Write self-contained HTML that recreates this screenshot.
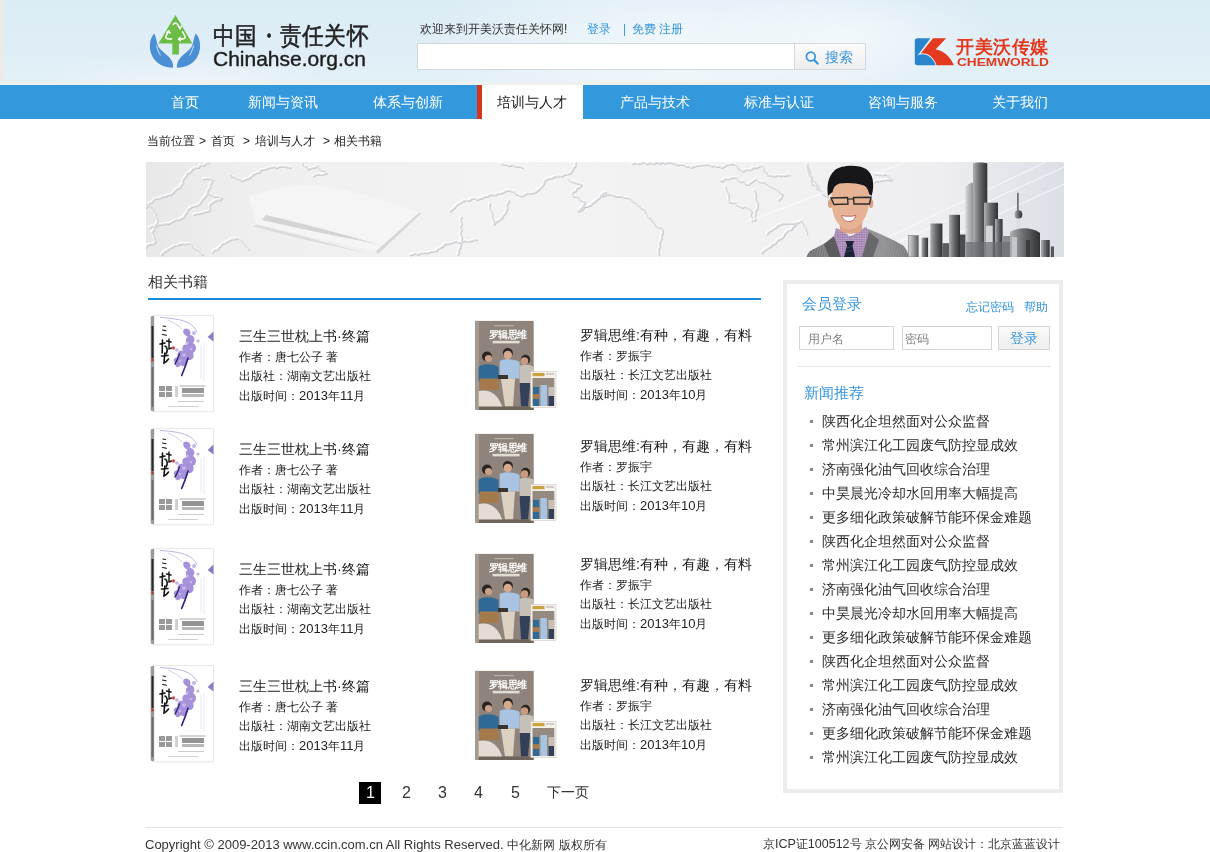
<!DOCTYPE html>
<html><head><meta charset="utf-8">
<style>
*{margin:0;padding:0;box-sizing:border-box}
html,body{width:1210px;height:852px;overflow:hidden;background:#fff}
body{font-family:"Liberation Sans",sans-serif;color:#333;position:relative;will-change:transform}
.a{position:absolute;white-space:nowrap;line-height:1}
svg{display:block}
#hdr{position:absolute;left:0;top:0;width:1210px;height:85px;overflow:hidden;
 background:linear-gradient(180deg,#dbecf5 0%,#dfeef6 60%,#e3f0f7 100%)}
#nav{position:absolute;left:0;top:85px;width:1210px;height:34px;background:#3498dd}
#nav .it{position:absolute;top:0;height:34px;line-height:34px;font-size:14px;color:#fff}
#nav .act{background:#fff;border-left:5px solid #d6361e;color:#222}
.crumb{font-size:12px;color:#222}
.t{font-size:14px;color:#1a1a1a}
.d{font-size:12px;color:#222}
.nw{font-size:14px;color:#2a2a2a;left:822px}
.bul{position:absolute;left:810px;width:3px;height:3px;background:#888}
.pg{font-size:16px;color:#333}
.n{font-size:13px;line-height:0}
</style></head><body>
<svg width="0" height="0" style="position:absolute">
 <defs>
  <symbol id="bk1" viewBox="0 0 70 102">
   <path d="M2.7 3.5 L6.4 2.6 L6.4 98.8 L2.7 97.5 Z" fill="#9a9a9a"/>
   <rect x="3.5" y="13" width="2" height="32" fill="#2a2a2a"/>
   <rect x="3.4" y="45.5" width="2.2" height="3" fill="#c03030"/>
   <rect x="3.6" y="54" width="1.8" height="40" fill="#6a6a6a"/>
   <rect x="6.4" y="2.6" width="59.1" height="96.2" fill="#ffffff"/>
   <path d="M6.4 2.6 L65.5 2.6 L65.5 98.8 L6.4 98.8" fill="none" stroke="#e0e0e0" stroke-width="0.8"/>
   <path d="M12 4.5 C20 5 28 5.5 36 8 C42 10 47 14 49 19" stroke="#9080d0" stroke-width="0.6" fill="none"/>
   <path d="M20 7 C26 10 30 12 34 16" stroke="#a898d8" stroke-width="0.5" fill="none"/>
   <g fill="#9d86d6" opacity="0.9">
    <path d="M36 16 C40 14 44 18 42 22 C46 22 48 27 45 30 C49 32 49 38 45 40 C47 44 44 48 40 47 C40 52 36 55 33 52 C30 56 26 54 28 50 C24 48 26 44 30 44 C28 40 32 36 35 38 C33 34 36 30 39 32 C37 28 38 24 40 24 C36 22 34 19 36 16 Z"/>
   </g>
   <g fill="#c8b8ee"><circle cx="39" cy="30" r="1.6"/><circle cx="36" cy="42" r="1.8"/><circle cx="43" cy="36" r="1.3"/><circle cx="32" cy="48" r="1.2"/></g>
   <g fill="#b6a2e4" opacity="0.8"><circle cx="46" cy="20" r="2"/><circle cx="50" cy="28" r="1.6"/><circle cx="29" cy="37" r="1.8"/></g>
   <path d="M31.5 41 C30 45 29 48 27 51" stroke="#2a2480" stroke-width="1.4" fill="none" stroke-linecap="round"/>
   <path d="M40 45 C38 52 36 57 33.7 62.4" stroke="#2a2480" stroke-width="1.6" fill="none" stroke-linecap="round"/>
   <g stroke="#151515" fill="none" stroke-linecap="round">
    <path d="M15 13 L17.5 13.5 M14.5 17 L18 17.8 M14.5 21.5 L18.5 22.3" stroke-width="1.1"/>
    <path d="M12 31 L17 30 M14.5 27 L14.2 40 M17 33 C19.5 34 20 38 18 41" stroke-width="1.6"/>
    <path d="M18.5 28 L23 29 M21 26 L21 36 L23.5 35" stroke-width="1.4"/>
    <path d="M13.5 43 L20 42.5 M16.8 40 L16 50 C18 49 19.5 47.5 20.5 46" stroke-width="1.6"/>
   </g>
   <rect x="24.3" y="33.5" width="2.4" height="3" fill="#c83030"/>
   <path d="M59.6 24 L65.5 18.4 L65.5 28.5 Z" fill="#8c7cc8"/>
   <path d="M56 30 L56 68 M53 32 L53 66" stroke="#d4ccea" stroke-width="0.5"/>
   <g fill="#9a9a9a" transform="translate(0,10)"><rect x="11" y="63" width="6" height="5"/><rect x="18" y="63" width="6" height="5"/><rect x="11" y="69" width="6" height="5"/><rect x="18" y="69" width="6" height="5"/>
   <rect x="27" y="63" width="3" height="11" fill="#d0d0d0"/>
   <rect x="31.5" y="62.4" width="26" height="1.2" fill="#b8b8b8"/>
   <rect x="34" y="65" width="22" height="5" fill="#959595"/>
   <rect x="34" y="71" width="22" height="3" fill="#b8b8b8"/>
   <rect x="30" y="78" width="26" height="1" fill="#cccccc"/></g>
   <rect x="20" y="93" width="30" height="1" fill="#d0d0d0"/>
  </symbol>
  <symbol id="bk2" viewBox="0 0 90 96">
   <rect x="3" y="1.9" width="58.7" height="89.1" fill="#8e847b"/>
   <rect x="3" y="1.9" width="4" height="89.1" fill="#a39a91"/>
   <text x="16.5" y="19" font-size="9.5" fill="#fff" font-weight="bold" letter-spacing="-0.4">罗辑思维</text>
   <rect x="20.6" y="21.8" width="27" height="2.6" fill="#e0dcd6"/>
   <rect x="22" y="6" width="20" height="1.2" fill="#b8b0a8"/>
   <path d="M6.6 72 C14 70 26 72 31 90 L6.6 90 Z" fill="#e4dcd2"/>
   <circle cx="15" cy="37.5" r="5" fill="#2a2420"/>
   <circle cx="16.5" cy="39.5" r="3.6" fill="#caa08a"/>
   <path d="M6.6 48 C9 45 20 44 26.5 48 L26.5 61.7 L6.6 61.7 Z" fill="#2f6a96"/>
   <path d="M7.7 59.4 L26.5 59.4 L27 71 L7.7 71 Z" fill="#a47a4c"/>
   <circle cx="35.8" cy="34" r="5" fill="#2a2420"/>
   <circle cx="35.8" cy="36" r="4.2" fill="#d6aa8c"/>
   <path d="M27.7 42 C31 39.4 42 39.4 47.6 43 L47.6 59.4 L27.7 59.4 Z" fill="#a9c4e2"/>
   <path d="M28.9 59.4 L43 59.4 L41 87.5 L33 87.5 Z" fill="#ddd2c2"/>
   <path d="M26 56 L36 56 L36 60 L26 60 Z" fill="#3a3430"/>
   <circle cx="53.5" cy="40.5" r="4.7" fill="#2a2420"/>
   <circle cx="52.5" cy="42" r="3.8" fill="#c89c80"/>
   <path d="M47.6 47 C50 45.3 59 45.3 61.7 48 L61.7 66.4 L47.6 66.4 Z" fill="#c6c0b8"/>
   <path d="M47.6 64 L58.2 64 L56 87.5 L49 87.5 Z" fill="#34405a"/>
   <rect x="6.6" y="87.5" width="55" height="3.5" fill="#6e645a"/>
   <rect x="58.8" y="52.3" width="25.2" height="36.4" fill="#f4f0ea" stroke="#c8c0b6" stroke-width="0.5"/>
   <rect x="60.5" y="54" width="12" height="3.2" fill="#c9a440"/>
   <rect x="74" y="54.5" width="8" height="1" fill="#aaa"/>
   <rect x="60.5" y="59" width="21.8" height="28" fill="#958a80"/>
   <path d="M61 68 L67 68 L67 87 L61 87 Z" fill="#2f6a96"/>
   <path d="M61 75 L67 75 L67 80 L61 80 Z" fill="#a47a4c"/>
   <path d="M68.5 66 L75 66 L75 87 L68.5 87 Z" fill="#a9c4e2"/>
   <path d="M76.5 68 L82 68 L82 87 L76.5 87 Z" fill="#c6c0b8"/>
   <path d="M76.5 77 L82 77 L82 87 L76.5 87 Z" fill="#34405a"/>
  </symbol>
 </defs>
</svg>
<div id="hdr">
 <div style="position:absolute;left:0;top:0;width:4px;height:85px;background:#eaeceb"></div>
 <div style="position:absolute;left:420px;top:-50px;width:520px;height:190px;border-radius:50%;background:radial-gradient(ellipse at center,rgba(255,255,255,.6) 0%,rgba(255,255,255,0) 70%)"></div>
 <div style="position:absolute;left:700px;top:-20px;width:300px;height:110px;border-radius:50%;background:radial-gradient(ellipse at center,rgba(255,255,255,.5) 0%,rgba(255,255,255,0) 70%)"></div>
 <div style="position:absolute;left:30px;top:50px;width:320px;height:70px;border-radius:50%;background:radial-gradient(ellipse at center,rgba(255,255,255,.35) 0%,rgba(255,255,255,0) 70%)"></div>
 
 <div style="position:absolute;left:0;top:82px;width:1210px;height:3px;background:#eff1ee"></div>
</div>
<!-- logo icon -->
<svg class="a" style="left:140px;top:8px" width="70" height="67" viewBox="0 0 70 67">
 <path d="M35.4 7 L52.4 35.4 L38.9 35.4 L38.9 46.4 L32.3 46.4 L32.3 35.4 L18.5 35.4 Z" fill="#6cbd45"/>
 <g fill="none" stroke="#fff" stroke-width="1.5" stroke-linecap="round" stroke-linejoin="round">
  <path d="M33.2 16.5 C34.5 14.5 36.3 14.5 37.6 16.5 L40 20.5"/>
  <path d="M38.6 18.8 L40.2 20.8 L41.2 18.2"/>
  <path d="M42.6 23.8 L44.6 27.3 C45.8 29.4 45 31 42.6 31 L39 31"/>
  <path d="M40.4 29.5 L38.6 31 L40.4 32.6"/>
  <path d="M31.6 31 L28.3 31 C25.9 31 25.1 29.4 26.3 27.3 L28.6 23.3"/>
  <path d="M26.8 24.6 L28.8 22.8 L30 25.2"/>
 </g>
 <path d="M14.2 25.6 C9 31 8 43 14 51 C18 56 24 59.5 33 59.8 C33.6 56 32 52 28.5 48.5 C25 45 20 42 18 38 C16.5 34 16 29 14.2 25.6 Z" fill="#4b8fd5"/>
 <path d="M55.8 25.6 C61 31 62 43 56 51 C52 56 46 59.5 37 59.8 C36.4 56 38 52 41.5 48.5 C45 45 50 42 52 38 C53.5 34 54 29 55.8 25.6 Z" fill="#4b8fd5"/>
 <path d="M16.5 37.5 C17.5 42 19 45 20.5 47.5" stroke="#e4eef5" stroke-width="0.9" fill="none"/>
 <path d="M53.5 37.5 C52.5 42 51 45 49.5 47.5" stroke="#e4eef5" stroke-width="0.9" fill="none"/>
</svg>
<div class="a" style="left:213px;top:24px;font-size:22px;color:#222;font-weight:500;letter-spacing:0.3px;-webkit-text-stroke:0.5px #222;transform:scaleY(1.11);transform-origin:0 0">中国・责任关怀</div>
<div class="a" style="left:213px;top:48px;font-size:21px;color:#1e1e1e;-webkit-text-stroke:0.4px #1e1e1e">Chinahse.org.cn</div>
<div class="a" style="left:420px;top:23px;font-size:12px;color:#333">欢迎来到开美沃责任关怀网!</div>
<div class="a" style="left:587px;top:23px;font-size:12px;color:#3795dd">登录</div>
<div class="a" style="left:623px;top:23px;font-size:12px;color:#3795dd">|</div>
<div class="a" style="left:632px;top:23px;font-size:12px;color:#3795dd">免费 注册</div>
<div class="a" style="left:417px;top:43px;width:378px;height:27px;background:#fff;border:1px solid #d3d8dc"></div>
<div class="a" style="left:794px;top:43px;width:72px;height:27px;background:linear-gradient(#fbfbfb,#eeeeee);border:1px solid #d3d8dc"></div>
<svg class="a" style="left:804px;top:50px" width="16" height="16" viewBox="0 0 16 16"><circle cx="6.8" cy="6.5" r="4.4" stroke="#3795dd" stroke-width="1.7" fill="none"/><path d="M10.2 10 L13.6 13.6" stroke="#3795dd" stroke-width="2.2" stroke-linecap="round"/></svg>
<div class="a" style="left:825px;top:50px;font-size:14px;color:#3795dd">搜索</div>
<!-- chemworld logo -->
<svg class="a" style="left:912px;top:36px" width="44" height="32" viewBox="0 0 44 32">
 <path d="M5.3 2.2 L18.4 2.2 L5.6 19.6 C12 16.3 20 19.5 23.6 29.2 L5.3 29.2 C3.8 29.2 2.8 28.2 2.8 26.7 L2.8 4.7 C2.8 3.2 3.8 2.2 5.3 2.2 Z" fill="#2a85cc"/>
 <path d="M21 2.2 L34 2.2 L23.6 13.5 C31 14.5 38 20 41.9 29.2 L24.5 29.2 C22 21 16 16.5 8.9 17.2 Z" fill="#e2391f"/>
</svg>
<div class="a" style="left:956px;top:38px;font-family:'Liberation Serif',serif;font-size:18px;color:#e2391f;font-weight:bold;letter-spacing:0.6px">开美沃传媒</div>
<div class="a" style="left:957px;top:57px;font-size:10.5px;color:#e2391f;font-weight:bold;transform:scaleX(1.3);transform-origin:0 0">CHEMWORLD</div>

<div id="nav">
 <div class="it" style="left:171px">首页</div>
 <div class="it" style="left:248px">新闻与资讯</div>
 <div class="it" style="left:373px">体系与创新</div>
 <div class="it act" style="left:477px;width:106px;padding-left:15px">培训与人才</div>
 <div class="it" style="left:620px">产品与技术</div>
 <div class="it" style="left:744px">标准与认证</div>
 <div class="it" style="left:868px">咨询与服务</div>
 <div class="it" style="left:992px">关于我们</div>
</div>

<div class="a crumb" style="left:147px;top:135px">当前位置</div>
<div class="a crumb" style="left:199px;top:135px">&gt;</div>
<div class="a crumb" style="left:211px;top:135px">首页</div>
<div class="a crumb" style="left:243px;top:135px">&gt;</div>
<div class="a crumb" style="left:255px;top:135px">培训与人才</div>
<div class="a crumb" style="left:323px;top:135px">&gt;</div>
<div class="a crumb" style="left:334px;top:135px">相关书籍</div>

<!-- banner -->
<svg id="banner" class="a" style="left:146px;top:162px" width="918" height="95" viewBox="0 0 918 95">
 <defs>
  <linearGradient id="bg1" x1="0" y1="0" x2="1" y2="0">
   <stop offset="0" stop-color="#e8e8e9"/><stop offset="0.12" stop-color="#efeff0"/><stop offset="0.4" stop-color="#f3f3f3"/><stop offset="0.7" stop-color="#f1f1f2"/><stop offset="0.86" stop-color="#eeeef0"/><stop offset="1" stop-color="#dcdfe6"/>
  </linearGradient>
  <linearGradient id="suit" x1="0" y1="0" x2="1" y2="0">
   <stop offset="0" stop-color="#7a7a7c"/><stop offset="0.5" stop-color="#9a9a9c"/><stop offset="1" stop-color="#808082"/>
  </linearGradient>
  <linearGradient id="bld" x1="0" y1="0" x2="1" y2="0">
   <stop offset="0" stop-color="#5a5c60"/><stop offset="0.5" stop-color="#9a9ca0"/><stop offset="1" stop-color="#4a4c50"/>
  </linearGradient>
 </defs>
 <rect width="918" height="95" fill="url(#bg1)"/>
 <g fill="none" stroke-linejoin="round" stroke-linecap="round">
  <path d="M0.0 45.5 L1.6 43.3 L3.3 41.2 L5.9 40.1 L7.6 38.0 L9.8 36.4 L12.5 36.6 L14.8 35.6 L17.1 34.2 L19.8 34.4 L22.0 32.7 L24.7 33.0 L26.9 31.0 L28.8 28.6 L31.1 26.7 L34.0 25.6 L35.0 23.1 L37.0 21.1 L36.8 18.1 L38.1 15.8 L40.1 13.8 L41.0 11.3 L43.7 10.7 L45.3 8.6 L47.2 6.8 L49.4 5.6 L52.4 5.6 L54.4 2.8 L57.6 3.5 L59.9 1.4 L62.7 0.8 M57.0 17.0 L60.2 16.6 L63.4 16.8 L66.5 18.0 L65.9 20.5 L64.0 22.4 L64.3 25.3 L62.5 27.3 L61.5 29.6 L60.8 32.0 L59.1 34.8 L56.8 37.1 L55.0 39.8 L53.3 41.9 L51.1 43.2 L48.7 44.2 L46.0 44.5 L44.1 46.3 L41.8 47.4 L40.9 50.1 L39.1 52.4 L38.0 55.0 L35.4 56.2 L32.9 57.7 L29.8 57.8 L27.2 59.2 L24.7 60.7 L22.2 61.8 L19.4 61.7 L16.9 62.4 L14.1 62.3 L11.5 63.2 L9.1 64.8 L6.2 63.9 L3.8 65.5 M60.8 32.2 L63.5 32.0 L65.9 33.3 L68.3 34.6 L71.1 34.0 L73.5 35.3 L76.0 36.0 L74.2 38.0 L71.3 37.9 L68.9 38.9 L66.8 40.4 L64.6 41.7 L63.2 44.0 L63.7 46.9 L62.7 49.3 L60.1 49.5 L57.6 50.3 L55.1 51.0 L52.6 51.9 L49.9 51.7 L47.5 53.0 M83.6 12.3 L85.4 14.5 L88.2 14.9 L90.3 16.6 L93.2 16.8 L95.0 19.0 L97.5 18.2 L99.7 17.0 L102.4 16.5 L104.5 15.0 L106.5 13.2 L108.6 11.6 L110.9 10.7 L113.5 10.1 L115.2 7.7 L117.9 7.5 L120.4 6.9 L122.8 5.8 L125.3 5.2 L127.8 4.6 L130.6 5.7 L133.0 4.7 L135.9 4.1 L138.8 4.6 L141.6 5.1 L144.5 5.6 M156.0 0.8 L157.2 3.6 L160.4 4.7 L161.6 7.5 L163.9 6.4 L166.3 5.7 L169.0 5.4 L171.0 3.7 L173.0 6.2 L175.3 8.1 L178.5 9.0 L180.6 11.3 L178.0 12.1 L175.3 12.8 L172.4 12.2 L169.7 12.6 L167.3 14.2 M15.2 93.0 L17.0 90.8 L19.2 89.3 L21.5 87.8 L23.7 86.2 L26.3 85.1 L28.5 83.5 L31.1 83.4 L33.5 82.3 L36.0 81.5 L38.6 82.1 L41.1 81.6 L43.7 81.6 L45.5 83.3 L46.9 85.6 L49.1 86.8 L51.3 88.1 L53.0 89.9 L54.8 91.7 L57.0 93.0 M66.5 91.0 L67.7 88.4 L70.9 87.9 L72.6 85.8 L74.7 84.1 L76.0 81.6 L78.7 81.3 L80.9 79.5 L83.4 78.6 L85.7 77.0 L88.6 77.2 L91.0 76.0 L93.6 77.2 L95.6 79.1 L97.3 81.2 L99.3 83.1 L101.0 85.2 L102.7 87.4 M0.0 41.7 L2.6 42.9 L4.6 44.7 L6.2 46.9 L7.6 49.3 L9.4 51.9 L9.8 54.9 L11.4 57.5 L11.4 60.7 L9.3 62.7 L8.3 65.3 L7.8 68.2 L5.7 70.2 L7.2 72.4 L7.9 74.9 L8.8 77.3 L9.5 79.8 L7.6 81.9 L4.4 82.0 L1.8 83.1 L0.0 85.5 M304.0 49.3 L306.2 47.5 L308.5 45.8 L310.2 43.4 L312.5 41.7 L315.0 40.4 L317.5 38.9 L320.1 38.0 L323.0 38.8 L325.5 36.9 L328.2 36.2 L331.2 37.8 L333.8 36.5 L336.5 36.0 L338.8 34.5 L341.6 34.5 L343.8 32.7 L346.7 32.9 L349.5 33.1 L351.7 31.3 L354.7 31.3 L357.5 30.3 L360.0 28.6 L363.0 28.4 L365.4 29.3 L367.9 30.0 L369.6 32.3 L372.2 32.9 L374.5 34.0 L377.1 33.8 L379.3 32.0 L381.6 31.0 L384.5 31.5 L387.0 31.0 L389.4 29.9 L391.6 28.4 L394.0 26.5 L395.9 24.3 L397.6 21.9 L398.7 18.9 L401.0 17.0 L403.6 16.6 L406.0 15.8 L408.5 14.6 L411.0 14.1 L413.7 14.2 L416.3 14.2 L418.4 12.5 L421.2 12.2 L423.9 11.5 L425.8 9.4 L427.0 6.5 L429.2 4.1 L429.6 0.8 M344.0 41.7 L343.3 44.5 L343.8 47.2 L345.5 49.6 L346.2 52.2 L346.0 55.0 L347.2 57.4 L347.9 59.9 L347.9 62.6 L349.3 60.2 L351.9 59.0 L354.2 57.5 L356.0 55.5 L357.4 53.1 L359.3 51.2 L360.4 48.7 L361.4 46.1 L360.6 43.0 L362.6 40.7 L363.0 38.0 M422.0 17.0 L424.3 19.0 L427.1 19.9 L429.8 20.9 L432.7 21.5 L435.3 22.7 L433.9 25.1 L431.1 26.1 L429.9 28.7 L427.2 29.8 L425.8 32.2 L427.5 34.4 L430.3 34.5 L432.5 35.8 L434.1 38.1 L436.6 39.0 L439.0 39.8 L437.7 42.6 L435.9 45.1 L434.0 47.4 L431.5 49.3 L434.4 48.7 L436.7 47.2 L438.5 44.5 L441.6 44.5 L444.2 43.4 L446.3 41.5 L448.6 39.8 L450.7 37.6 L453.2 36.1 L454.9 33.5 L457.0 31.4 L460.0 30.3 M315.5 55.0 L314.5 57.5 L315.2 60.1 L315.4 62.6 L314.5 65.1 L315.6 67.7 L314.7 70.2 L314.8 72.7 L316.1 75.3 L315.5 77.8 L315.4 80.5 L314.7 83.0 L314.2 85.5 L312.8 87.9 L312.8 90.6 L311.7 93.0 M264.0 93.0 L266.5 92.4 L269.0 91.4 L271.8 92.7 L274.2 91.0 L276.8 90.9 L279.4 90.7 L282.0 91.0 L284.4 89.5 L287.0 89.3 L289.9 88.8 L292.0 86.7 L294.5 85.5 L297.0 84.2 L299.0 81.9 L302.0 81.6 L304.7 81.1 L307.3 80.2 L310.0 79.4 L312.9 80.8 L315.5 79.8 L318.0 78.8 L320.6 79.1 L323.2 79.3 L325.7 78.6 L328.2 77.8 L330.8 77.8 M355.5 1.8 L358.1 2.3 L360.7 2.9 L363.2 3.8 L366.1 2.8 L368.5 4.3 L371.3 4.1 L373.9 4.6 L376.4 5.6 M454.0 34.0 L457.3 34.0 L460.3 32.8 L463.5 32.2 L466.2 32.9 L468.8 33.8 L471.5 34.7 L474.4 34.2 L477.0 35.2 L479.8 35.5 L482.5 36.0 L484.7 37.6 L486.6 39.6 L489.1 40.8 L491.1 42.6 L493.4 44.1 L494.9 46.5 L497.7 47.4 L498.9 49.9 L500.1 52.4 L501.5 54.8 L504.2 56.2 L505.3 58.8 L507.5 60.8 L509.2 63.3 L511.7 65.1 L514.9 65.8 L516.7 68.3 L516.8 71.2 L515.3 73.7 L515.4 76.5 L514.3 79.1 L513.0 81.6 L513.9 84.4 L512.6 87.3 L512.4 90.2 L513.0 93.0 M573.8 18.9 L576.7 19.0 L578.9 16.6 L581.9 17.1 L584.5 16.2 L587.0 15.1 L589.9 15.7 L591.7 18.4 L594.2 19.8 L597.5 19.6 L599.3 22.3 L602.3 22.7 L604.7 20.6 L607.4 18.9 L610.0 17.0 L612.0 19.2 L614.7 20.2 L617.8 20.1 L620.1 21.9 L622.5 23.4 L625.0 24.6 L627.5 25.8 L630.0 27.1 L632.1 28.8 L633.9 31.1 L636.5 32.2 L635.5 35.7 L632.7 38.0 M579.5 24.6 L580.0 27.2 L580.9 29.6 L582.4 31.9 L582.4 34.6 L582.4 37.3 L583.3 39.8 L585.9 40.8 L588.8 40.8 L590.7 43.7 L593.4 44.2 L595.9 45.5 L599.1 44.7 L601.6 46.0 L604.0 47.4 L605.5 50.1 L604.4 53.2 L606.0 55.9 L606.0 58.8 M608.0 28.4 L609.5 30.8 L609.7 33.7 L609.4 36.6 L610.4 39.2 L611.8 41.7 L611.8 44.3 L611.5 46.8 L609.3 48.8 L609.5 51.4 L608.7 53.8 L609.4 56.6 L608.0 58.8 M486.3 1.8 L489.1 0.7 L492.0 1.9 L494.8 1.2 L497.6 0.2 L500.6 2.0 L503.4 0.8 L505.9 1.1 L508.5 1.5 L511.0 -0.1 L513.5 1.6 L516.1 -0.1 L518.6 1.6 L521.1 0.7 L523.7 0.5 L526.2 0.8 L528.9 1.6 L531.4 3.1 L534.5 2.4 L537.3 2.8 L539.8 4.3 L542.7 4.4 L545.3 5.6 L547.7 4.3 L550.2 3.9 L552.7 3.2 L555.3 3.1 L557.9 2.8 L560.5 2.8 L563.1 2.8 L565.5 4.3 L568.2 3.7 L570.6 4.7 L573.3 4.4 L575.7 5.6 L578.4 4.3 L581.0 2.7 L584.0 2.2 L587.0 1.8 L590.1 2.9 L591.5 6.0 L594.1 7.6 L596.6 9.4 L599.1 7.9 L602.0 7.7 L605.0 7.9 L607.2 5.3 L610.4 6.0 L612.8 4.4 L615.6 3.7 L617.0 6.1 L617.8 8.8 L620.1 10.7 L621.3 13.2 L623.8 13.2 L626.4 13.6 L628.9 14.3 L631.4 12.9 L634.0 13.9 L636.5 13.7 L639.0 13.5 L641.6 13.0 L644.1 13.2 M661.2 1.8 L662.0 4.6 L663.1 7.3 L663.4 10.2 L663.0 13.2 L665.4 14.9 L665.8 17.9 L668.2 19.5 L670.0 21.6 L671.7 23.7 L672.6 26.5 L674.5 29.0 L676.8 30.9 L679.4 32.4 L682.0 34.0 M615.6 91.0 L617.6 89.0 L619.7 87.4 L622.0 85.9 L624.5 84.7 L626.3 82.5 L629.0 81.6 L630.8 79.6 L632.4 77.4 L635.4 76.6 L637.3 74.7 L638.5 72.2 L640.3 70.2 L642.1 68.1 L645.3 67.8 L646.6 65.0 L648.8 63.4 L650.5 61.2 L653.2 60.2 L655.5 58.8 L656.7 61.4 L657.8 64.1 L659.5 66.5 L660.1 69.4 L661.2 72.0 M621.3 72.0 L622.9 69.5 L625.4 68.4 L627.4 66.6 L630.0 65.6 L631.8 63.3 L634.6 62.6 L637.3 61.2 L640.3 61.5 L643.1 61.1 L646.0 61.5 L648.9 61.1 L651.7 60.7 M660.6 2.4 L660.7 5.0 L661.5 7.5 L662.0 10.1 L662.3 12.7 L664.0 14.9 L664.7 17.4 L665.0 20.0 L666.1 22.6 L669.3 23.2 L670.2 25.9 L672.2 27.7 L675.0 28.6 L675.6 31.7 L678.0 33.0 L681.4 35.0 M726.0 11.0 L728.5 12.2 L731.2 12.0 L733.7 12.7 L736.3 13.2 L739.1 12.1 L741.6 13.3 L743.8 15.5 L746.0 17.7 L743.5 18.0 L740.9 17.6 L738.4 18.0 L735.9 18.3 L733.5 19.2 L730.9 18.8 L728.5 20.0" stroke="#ffffff" stroke-width="1.8" transform="translate(-0.7,-0.7)"/>
  <path d="M0.0 45.5 L1.6 43.3 L3.3 41.2 L5.9 40.1 L7.6 38.0 L9.8 36.4 L12.5 36.6 L14.8 35.6 L17.1 34.2 L19.8 34.4 L22.0 32.7 L24.7 33.0 L26.9 31.0 L28.8 28.6 L31.1 26.7 L34.0 25.6 L35.0 23.1 L37.0 21.1 L36.8 18.1 L38.1 15.8 L40.1 13.8 L41.0 11.3 L43.7 10.7 L45.3 8.6 L47.2 6.8 L49.4 5.6 L52.4 5.6 L54.4 2.8 L57.6 3.5 L59.9 1.4 L62.7 0.8 M57.0 17.0 L60.2 16.6 L63.4 16.8 L66.5 18.0 L65.9 20.5 L64.0 22.4 L64.3 25.3 L62.5 27.3 L61.5 29.6 L60.8 32.0 L59.1 34.8 L56.8 37.1 L55.0 39.8 L53.3 41.9 L51.1 43.2 L48.7 44.2 L46.0 44.5 L44.1 46.3 L41.8 47.4 L40.9 50.1 L39.1 52.4 L38.0 55.0 L35.4 56.2 L32.9 57.7 L29.8 57.8 L27.2 59.2 L24.7 60.7 L22.2 61.8 L19.4 61.7 L16.9 62.4 L14.1 62.3 L11.5 63.2 L9.1 64.8 L6.2 63.9 L3.8 65.5 M60.8 32.2 L63.5 32.0 L65.9 33.3 L68.3 34.6 L71.1 34.0 L73.5 35.3 L76.0 36.0 L74.2 38.0 L71.3 37.9 L68.9 38.9 L66.8 40.4 L64.6 41.7 L63.2 44.0 L63.7 46.9 L62.7 49.3 L60.1 49.5 L57.6 50.3 L55.1 51.0 L52.6 51.9 L49.9 51.7 L47.5 53.0 M83.6 12.3 L85.4 14.5 L88.2 14.9 L90.3 16.6 L93.2 16.8 L95.0 19.0 L97.5 18.2 L99.7 17.0 L102.4 16.5 L104.5 15.0 L106.5 13.2 L108.6 11.6 L110.9 10.7 L113.5 10.1 L115.2 7.7 L117.9 7.5 L120.4 6.9 L122.8 5.8 L125.3 5.2 L127.8 4.6 L130.6 5.7 L133.0 4.7 L135.9 4.1 L138.8 4.6 L141.6 5.1 L144.5 5.6 M156.0 0.8 L157.2 3.6 L160.4 4.7 L161.6 7.5 L163.9 6.4 L166.3 5.7 L169.0 5.4 L171.0 3.7 L173.0 6.2 L175.3 8.1 L178.5 9.0 L180.6 11.3 L178.0 12.1 L175.3 12.8 L172.4 12.2 L169.7 12.6 L167.3 14.2 M15.2 93.0 L17.0 90.8 L19.2 89.3 L21.5 87.8 L23.7 86.2 L26.3 85.1 L28.5 83.5 L31.1 83.4 L33.5 82.3 L36.0 81.5 L38.6 82.1 L41.1 81.6 L43.7 81.6 L45.5 83.3 L46.9 85.6 L49.1 86.8 L51.3 88.1 L53.0 89.9 L54.8 91.7 L57.0 93.0 M66.5 91.0 L67.7 88.4 L70.9 87.9 L72.6 85.8 L74.7 84.1 L76.0 81.6 L78.7 81.3 L80.9 79.5 L83.4 78.6 L85.7 77.0 L88.6 77.2 L91.0 76.0 L93.6 77.2 L95.6 79.1 L97.3 81.2 L99.3 83.1 L101.0 85.2 L102.7 87.4 M0.0 41.7 L2.6 42.9 L4.6 44.7 L6.2 46.9 L7.6 49.3 L9.4 51.9 L9.8 54.9 L11.4 57.5 L11.4 60.7 L9.3 62.7 L8.3 65.3 L7.8 68.2 L5.7 70.2 L7.2 72.4 L7.9 74.9 L8.8 77.3 L9.5 79.8 L7.6 81.9 L4.4 82.0 L1.8 83.1 L0.0 85.5 M304.0 49.3 L306.2 47.5 L308.5 45.8 L310.2 43.4 L312.5 41.7 L315.0 40.4 L317.5 38.9 L320.1 38.0 L323.0 38.8 L325.5 36.9 L328.2 36.2 L331.2 37.8 L333.8 36.5 L336.5 36.0 L338.8 34.5 L341.6 34.5 L343.8 32.7 L346.7 32.9 L349.5 33.1 L351.7 31.3 L354.7 31.3 L357.5 30.3 L360.0 28.6 L363.0 28.4 L365.4 29.3 L367.9 30.0 L369.6 32.3 L372.2 32.9 L374.5 34.0 L377.1 33.8 L379.3 32.0 L381.6 31.0 L384.5 31.5 L387.0 31.0 L389.4 29.9 L391.6 28.4 L394.0 26.5 L395.9 24.3 L397.6 21.9 L398.7 18.9 L401.0 17.0 L403.6 16.6 L406.0 15.8 L408.5 14.6 L411.0 14.1 L413.7 14.2 L416.3 14.2 L418.4 12.5 L421.2 12.2 L423.9 11.5 L425.8 9.4 L427.0 6.5 L429.2 4.1 L429.6 0.8 M344.0 41.7 L343.3 44.5 L343.8 47.2 L345.5 49.6 L346.2 52.2 L346.0 55.0 L347.2 57.4 L347.9 59.9 L347.9 62.6 L349.3 60.2 L351.9 59.0 L354.2 57.5 L356.0 55.5 L357.4 53.1 L359.3 51.2 L360.4 48.7 L361.4 46.1 L360.6 43.0 L362.6 40.7 L363.0 38.0 M422.0 17.0 L424.3 19.0 L427.1 19.9 L429.8 20.9 L432.7 21.5 L435.3 22.7 L433.9 25.1 L431.1 26.1 L429.9 28.7 L427.2 29.8 L425.8 32.2 L427.5 34.4 L430.3 34.5 L432.5 35.8 L434.1 38.1 L436.6 39.0 L439.0 39.8 L437.7 42.6 L435.9 45.1 L434.0 47.4 L431.5 49.3 L434.4 48.7 L436.7 47.2 L438.5 44.5 L441.6 44.5 L444.2 43.4 L446.3 41.5 L448.6 39.8 L450.7 37.6 L453.2 36.1 L454.9 33.5 L457.0 31.4 L460.0 30.3 M315.5 55.0 L314.5 57.5 L315.2 60.1 L315.4 62.6 L314.5 65.1 L315.6 67.7 L314.7 70.2 L314.8 72.7 L316.1 75.3 L315.5 77.8 L315.4 80.5 L314.7 83.0 L314.2 85.5 L312.8 87.9 L312.8 90.6 L311.7 93.0 M264.0 93.0 L266.5 92.4 L269.0 91.4 L271.8 92.7 L274.2 91.0 L276.8 90.9 L279.4 90.7 L282.0 91.0 L284.4 89.5 L287.0 89.3 L289.9 88.8 L292.0 86.7 L294.5 85.5 L297.0 84.2 L299.0 81.9 L302.0 81.6 L304.7 81.1 L307.3 80.2 L310.0 79.4 L312.9 80.8 L315.5 79.8 L318.0 78.8 L320.6 79.1 L323.2 79.3 L325.7 78.6 L328.2 77.8 L330.8 77.8 M355.5 1.8 L358.1 2.3 L360.7 2.9 L363.2 3.8 L366.1 2.8 L368.5 4.3 L371.3 4.1 L373.9 4.6 L376.4 5.6 M454.0 34.0 L457.3 34.0 L460.3 32.8 L463.5 32.2 L466.2 32.9 L468.8 33.8 L471.5 34.7 L474.4 34.2 L477.0 35.2 L479.8 35.5 L482.5 36.0 L484.7 37.6 L486.6 39.6 L489.1 40.8 L491.1 42.6 L493.4 44.1 L494.9 46.5 L497.7 47.4 L498.9 49.9 L500.1 52.4 L501.5 54.8 L504.2 56.2 L505.3 58.8 L507.5 60.8 L509.2 63.3 L511.7 65.1 L514.9 65.8 L516.7 68.3 L516.8 71.2 L515.3 73.7 L515.4 76.5 L514.3 79.1 L513.0 81.6 L513.9 84.4 L512.6 87.3 L512.4 90.2 L513.0 93.0 M573.8 18.9 L576.7 19.0 L578.9 16.6 L581.9 17.1 L584.5 16.2 L587.0 15.1 L589.9 15.7 L591.7 18.4 L594.2 19.8 L597.5 19.6 L599.3 22.3 L602.3 22.7 L604.7 20.6 L607.4 18.9 L610.0 17.0 L612.0 19.2 L614.7 20.2 L617.8 20.1 L620.1 21.9 L622.5 23.4 L625.0 24.6 L627.5 25.8 L630.0 27.1 L632.1 28.8 L633.9 31.1 L636.5 32.2 L635.5 35.7 L632.7 38.0 M579.5 24.6 L580.0 27.2 L580.9 29.6 L582.4 31.9 L582.4 34.6 L582.4 37.3 L583.3 39.8 L585.9 40.8 L588.8 40.8 L590.7 43.7 L593.4 44.2 L595.9 45.5 L599.1 44.7 L601.6 46.0 L604.0 47.4 L605.5 50.1 L604.4 53.2 L606.0 55.9 L606.0 58.8 M608.0 28.4 L609.5 30.8 L609.7 33.7 L609.4 36.6 L610.4 39.2 L611.8 41.7 L611.8 44.3 L611.5 46.8 L609.3 48.8 L609.5 51.4 L608.7 53.8 L609.4 56.6 L608.0 58.8 M486.3 1.8 L489.1 0.7 L492.0 1.9 L494.8 1.2 L497.6 0.2 L500.6 2.0 L503.4 0.8 L505.9 1.1 L508.5 1.5 L511.0 -0.1 L513.5 1.6 L516.1 -0.1 L518.6 1.6 L521.1 0.7 L523.7 0.5 L526.2 0.8 L528.9 1.6 L531.4 3.1 L534.5 2.4 L537.3 2.8 L539.8 4.3 L542.7 4.4 L545.3 5.6 L547.7 4.3 L550.2 3.9 L552.7 3.2 L555.3 3.1 L557.9 2.8 L560.5 2.8 L563.1 2.8 L565.5 4.3 L568.2 3.7 L570.6 4.7 L573.3 4.4 L575.7 5.6 L578.4 4.3 L581.0 2.7 L584.0 2.2 L587.0 1.8 L590.1 2.9 L591.5 6.0 L594.1 7.6 L596.6 9.4 L599.1 7.9 L602.0 7.7 L605.0 7.9 L607.2 5.3 L610.4 6.0 L612.8 4.4 L615.6 3.7 L617.0 6.1 L617.8 8.8 L620.1 10.7 L621.3 13.2 L623.8 13.2 L626.4 13.6 L628.9 14.3 L631.4 12.9 L634.0 13.9 L636.5 13.7 L639.0 13.5 L641.6 13.0 L644.1 13.2 M661.2 1.8 L662.0 4.6 L663.1 7.3 L663.4 10.2 L663.0 13.2 L665.4 14.9 L665.8 17.9 L668.2 19.5 L670.0 21.6 L671.7 23.7 L672.6 26.5 L674.5 29.0 L676.8 30.9 L679.4 32.4 L682.0 34.0 M615.6 91.0 L617.6 89.0 L619.7 87.4 L622.0 85.9 L624.5 84.7 L626.3 82.5 L629.0 81.6 L630.8 79.6 L632.4 77.4 L635.4 76.6 L637.3 74.7 L638.5 72.2 L640.3 70.2 L642.1 68.1 L645.3 67.8 L646.6 65.0 L648.8 63.4 L650.5 61.2 L653.2 60.2 L655.5 58.8 L656.7 61.4 L657.8 64.1 L659.5 66.5 L660.1 69.4 L661.2 72.0 M621.3 72.0 L622.9 69.5 L625.4 68.4 L627.4 66.6 L630.0 65.6 L631.8 63.3 L634.6 62.6 L637.3 61.2 L640.3 61.5 L643.1 61.1 L646.0 61.5 L648.9 61.1 L651.7 60.7 M660.6 2.4 L660.7 5.0 L661.5 7.5 L662.0 10.1 L662.3 12.7 L664.0 14.9 L664.7 17.4 L665.0 20.0 L666.1 22.6 L669.3 23.2 L670.2 25.9 L672.2 27.7 L675.0 28.6 L675.6 31.7 L678.0 33.0 L681.4 35.0 M726.0 11.0 L728.5 12.2 L731.2 12.0 L733.7 12.7 L736.3 13.2 L739.1 12.1 L741.6 13.3 L743.8 15.5 L746.0 17.7 L743.5 18.0 L740.9 17.6 L738.4 18.0 L735.9 18.3 L733.5 19.2 L730.9 18.8 L728.5 20.0" stroke="#c6c6cd" stroke-width="1.4" transform="translate(0.6,0.7)"/>
  <path d="M0.0 45.5 L1.6 43.3 L3.3 41.2 L5.9 40.1 L7.6 38.0 L9.8 36.4 L12.5 36.6 L14.8 35.6 L17.1 34.2 L19.8 34.4 L22.0 32.7 L24.7 33.0 L26.9 31.0 L28.8 28.6 L31.1 26.7 L34.0 25.6 L35.0 23.1 L37.0 21.1 L36.8 18.1 L38.1 15.8 L40.1 13.8 L41.0 11.3 L43.7 10.7 L45.3 8.6 L47.2 6.8 L49.4 5.6 L52.4 5.6 L54.4 2.8 L57.6 3.5 L59.9 1.4 L62.7 0.8 M57.0 17.0 L60.2 16.6 L63.4 16.8 L66.5 18.0 L65.9 20.5 L64.0 22.4 L64.3 25.3 L62.5 27.3 L61.5 29.6 L60.8 32.0 L59.1 34.8 L56.8 37.1 L55.0 39.8 L53.3 41.9 L51.1 43.2 L48.7 44.2 L46.0 44.5 L44.1 46.3 L41.8 47.4 L40.9 50.1 L39.1 52.4 L38.0 55.0 L35.4 56.2 L32.9 57.7 L29.8 57.8 L27.2 59.2 L24.7 60.7 L22.2 61.8 L19.4 61.7 L16.9 62.4 L14.1 62.3 L11.5 63.2 L9.1 64.8 L6.2 63.9 L3.8 65.5 M60.8 32.2 L63.5 32.0 L65.9 33.3 L68.3 34.6 L71.1 34.0 L73.5 35.3 L76.0 36.0 L74.2 38.0 L71.3 37.9 L68.9 38.9 L66.8 40.4 L64.6 41.7 L63.2 44.0 L63.7 46.9 L62.7 49.3 L60.1 49.5 L57.6 50.3 L55.1 51.0 L52.6 51.9 L49.9 51.7 L47.5 53.0 M83.6 12.3 L85.4 14.5 L88.2 14.9 L90.3 16.6 L93.2 16.8 L95.0 19.0 L97.5 18.2 L99.7 17.0 L102.4 16.5 L104.5 15.0 L106.5 13.2 L108.6 11.6 L110.9 10.7 L113.5 10.1 L115.2 7.7 L117.9 7.5 L120.4 6.9 L122.8 5.8 L125.3 5.2 L127.8 4.6 L130.6 5.7 L133.0 4.7 L135.9 4.1 L138.8 4.6 L141.6 5.1 L144.5 5.6 M156.0 0.8 L157.2 3.6 L160.4 4.7 L161.6 7.5 L163.9 6.4 L166.3 5.7 L169.0 5.4 L171.0 3.7 L173.0 6.2 L175.3 8.1 L178.5 9.0 L180.6 11.3 L178.0 12.1 L175.3 12.8 L172.4 12.2 L169.7 12.6 L167.3 14.2 M15.2 93.0 L17.0 90.8 L19.2 89.3 L21.5 87.8 L23.7 86.2 L26.3 85.1 L28.5 83.5 L31.1 83.4 L33.5 82.3 L36.0 81.5 L38.6 82.1 L41.1 81.6 L43.7 81.6 L45.5 83.3 L46.9 85.6 L49.1 86.8 L51.3 88.1 L53.0 89.9 L54.8 91.7 L57.0 93.0 M66.5 91.0 L67.7 88.4 L70.9 87.9 L72.6 85.8 L74.7 84.1 L76.0 81.6 L78.7 81.3 L80.9 79.5 L83.4 78.6 L85.7 77.0 L88.6 77.2 L91.0 76.0 L93.6 77.2 L95.6 79.1 L97.3 81.2 L99.3 83.1 L101.0 85.2 L102.7 87.4 M0.0 41.7 L2.6 42.9 L4.6 44.7 L6.2 46.9 L7.6 49.3 L9.4 51.9 L9.8 54.9 L11.4 57.5 L11.4 60.7 L9.3 62.7 L8.3 65.3 L7.8 68.2 L5.7 70.2 L7.2 72.4 L7.9 74.9 L8.8 77.3 L9.5 79.8 L7.6 81.9 L4.4 82.0 L1.8 83.1 L0.0 85.5 M304.0 49.3 L306.2 47.5 L308.5 45.8 L310.2 43.4 L312.5 41.7 L315.0 40.4 L317.5 38.9 L320.1 38.0 L323.0 38.8 L325.5 36.9 L328.2 36.2 L331.2 37.8 L333.8 36.5 L336.5 36.0 L338.8 34.5 L341.6 34.5 L343.8 32.7 L346.7 32.9 L349.5 33.1 L351.7 31.3 L354.7 31.3 L357.5 30.3 L360.0 28.6 L363.0 28.4 L365.4 29.3 L367.9 30.0 L369.6 32.3 L372.2 32.9 L374.5 34.0 L377.1 33.8 L379.3 32.0 L381.6 31.0 L384.5 31.5 L387.0 31.0 L389.4 29.9 L391.6 28.4 L394.0 26.5 L395.9 24.3 L397.6 21.9 L398.7 18.9 L401.0 17.0 L403.6 16.6 L406.0 15.8 L408.5 14.6 L411.0 14.1 L413.7 14.2 L416.3 14.2 L418.4 12.5 L421.2 12.2 L423.9 11.5 L425.8 9.4 L427.0 6.5 L429.2 4.1 L429.6 0.8 M344.0 41.7 L343.3 44.5 L343.8 47.2 L345.5 49.6 L346.2 52.2 L346.0 55.0 L347.2 57.4 L347.9 59.9 L347.9 62.6 L349.3 60.2 L351.9 59.0 L354.2 57.5 L356.0 55.5 L357.4 53.1 L359.3 51.2 L360.4 48.7 L361.4 46.1 L360.6 43.0 L362.6 40.7 L363.0 38.0 M422.0 17.0 L424.3 19.0 L427.1 19.9 L429.8 20.9 L432.7 21.5 L435.3 22.7 L433.9 25.1 L431.1 26.1 L429.9 28.7 L427.2 29.8 L425.8 32.2 L427.5 34.4 L430.3 34.5 L432.5 35.8 L434.1 38.1 L436.6 39.0 L439.0 39.8 L437.7 42.6 L435.9 45.1 L434.0 47.4 L431.5 49.3 L434.4 48.7 L436.7 47.2 L438.5 44.5 L441.6 44.5 L444.2 43.4 L446.3 41.5 L448.6 39.8 L450.7 37.6 L453.2 36.1 L454.9 33.5 L457.0 31.4 L460.0 30.3 M315.5 55.0 L314.5 57.5 L315.2 60.1 L315.4 62.6 L314.5 65.1 L315.6 67.7 L314.7 70.2 L314.8 72.7 L316.1 75.3 L315.5 77.8 L315.4 80.5 L314.7 83.0 L314.2 85.5 L312.8 87.9 L312.8 90.6 L311.7 93.0 M264.0 93.0 L266.5 92.4 L269.0 91.4 L271.8 92.7 L274.2 91.0 L276.8 90.9 L279.4 90.7 L282.0 91.0 L284.4 89.5 L287.0 89.3 L289.9 88.8 L292.0 86.7 L294.5 85.5 L297.0 84.2 L299.0 81.9 L302.0 81.6 L304.7 81.1 L307.3 80.2 L310.0 79.4 L312.9 80.8 L315.5 79.8 L318.0 78.8 L320.6 79.1 L323.2 79.3 L325.7 78.6 L328.2 77.8 L330.8 77.8 M355.5 1.8 L358.1 2.3 L360.7 2.9 L363.2 3.8 L366.1 2.8 L368.5 4.3 L371.3 4.1 L373.9 4.6 L376.4 5.6 M454.0 34.0 L457.3 34.0 L460.3 32.8 L463.5 32.2 L466.2 32.9 L468.8 33.8 L471.5 34.7 L474.4 34.2 L477.0 35.2 L479.8 35.5 L482.5 36.0 L484.7 37.6 L486.6 39.6 L489.1 40.8 L491.1 42.6 L493.4 44.1 L494.9 46.5 L497.7 47.4 L498.9 49.9 L500.1 52.4 L501.5 54.8 L504.2 56.2 L505.3 58.8 L507.5 60.8 L509.2 63.3 L511.7 65.1 L514.9 65.8 L516.7 68.3 L516.8 71.2 L515.3 73.7 L515.4 76.5 L514.3 79.1 L513.0 81.6 L513.9 84.4 L512.6 87.3 L512.4 90.2 L513.0 93.0 M573.8 18.9 L576.7 19.0 L578.9 16.6 L581.9 17.1 L584.5 16.2 L587.0 15.1 L589.9 15.7 L591.7 18.4 L594.2 19.8 L597.5 19.6 L599.3 22.3 L602.3 22.7 L604.7 20.6 L607.4 18.9 L610.0 17.0 L612.0 19.2 L614.7 20.2 L617.8 20.1 L620.1 21.9 L622.5 23.4 L625.0 24.6 L627.5 25.8 L630.0 27.1 L632.1 28.8 L633.9 31.1 L636.5 32.2 L635.5 35.7 L632.7 38.0 M579.5 24.6 L580.0 27.2 L580.9 29.6 L582.4 31.9 L582.4 34.6 L582.4 37.3 L583.3 39.8 L585.9 40.8 L588.8 40.8 L590.7 43.7 L593.4 44.2 L595.9 45.5 L599.1 44.7 L601.6 46.0 L604.0 47.4 L605.5 50.1 L604.4 53.2 L606.0 55.9 L606.0 58.8 M608.0 28.4 L609.5 30.8 L609.7 33.7 L609.4 36.6 L610.4 39.2 L611.8 41.7 L611.8 44.3 L611.5 46.8 L609.3 48.8 L609.5 51.4 L608.7 53.8 L609.4 56.6 L608.0 58.8 M486.3 1.8 L489.1 0.7 L492.0 1.9 L494.8 1.2 L497.6 0.2 L500.6 2.0 L503.4 0.8 L505.9 1.1 L508.5 1.5 L511.0 -0.1 L513.5 1.6 L516.1 -0.1 L518.6 1.6 L521.1 0.7 L523.7 0.5 L526.2 0.8 L528.9 1.6 L531.4 3.1 L534.5 2.4 L537.3 2.8 L539.8 4.3 L542.7 4.4 L545.3 5.6 L547.7 4.3 L550.2 3.9 L552.7 3.2 L555.3 3.1 L557.9 2.8 L560.5 2.8 L563.1 2.8 L565.5 4.3 L568.2 3.7 L570.6 4.7 L573.3 4.4 L575.7 5.6 L578.4 4.3 L581.0 2.7 L584.0 2.2 L587.0 1.8 L590.1 2.9 L591.5 6.0 L594.1 7.6 L596.6 9.4 L599.1 7.9 L602.0 7.7 L605.0 7.9 L607.2 5.3 L610.4 6.0 L612.8 4.4 L615.6 3.7 L617.0 6.1 L617.8 8.8 L620.1 10.7 L621.3 13.2 L623.8 13.2 L626.4 13.6 L628.9 14.3 L631.4 12.9 L634.0 13.9 L636.5 13.7 L639.0 13.5 L641.6 13.0 L644.1 13.2 M661.2 1.8 L662.0 4.6 L663.1 7.3 L663.4 10.2 L663.0 13.2 L665.4 14.9 L665.8 17.9 L668.2 19.5 L670.0 21.6 L671.7 23.7 L672.6 26.5 L674.5 29.0 L676.8 30.9 L679.4 32.4 L682.0 34.0 M615.6 91.0 L617.6 89.0 L619.7 87.4 L622.0 85.9 L624.5 84.7 L626.3 82.5 L629.0 81.6 L630.8 79.6 L632.4 77.4 L635.4 76.6 L637.3 74.7 L638.5 72.2 L640.3 70.2 L642.1 68.1 L645.3 67.8 L646.6 65.0 L648.8 63.4 L650.5 61.2 L653.2 60.2 L655.5 58.8 L656.7 61.4 L657.8 64.1 L659.5 66.5 L660.1 69.4 L661.2 72.0 M621.3 72.0 L622.9 69.5 L625.4 68.4 L627.4 66.6 L630.0 65.6 L631.8 63.3 L634.6 62.6 L637.3 61.2 L640.3 61.5 L643.1 61.1 L646.0 61.5 L648.9 61.1 L651.7 60.7 M660.6 2.4 L660.7 5.0 L661.5 7.5 L662.0 10.1 L662.3 12.7 L664.0 14.9 L664.7 17.4 L665.0 20.0 L666.1 22.6 L669.3 23.2 L670.2 25.9 L672.2 27.7 L675.0 28.6 L675.6 31.7 L678.0 33.0 L681.4 35.0 M726.0 11.0 L728.5 12.2 L731.2 12.0 L733.7 12.7 L736.3 13.2 L739.1 12.1 L741.6 13.3 L743.8 15.5 L746.0 17.7 L743.5 18.0 L740.9 17.6 L738.4 18.0 L735.9 18.3 L733.5 19.2 L730.9 18.8 L728.5 20.0" stroke="#e2e2e6" stroke-width="1.2"/>
 </g>
 <g>
  <path d="M102.7 34.1 C130 26 150 22 171 22.7 C205 28 245 40 273.7 50.3 L230 89.3 C190 80 145 70 110.3 62.6 Z" fill="#f6f6f6" opacity="0.8"/>
  <path d="M120 53 C160 62 195 72 230 81.6 L236 83 C200 76 160 68 116 58 Z" fill="#d0d0d0" opacity="0.9"/>
  <path d="M110.3 62.6 C150 72 190 84 230 93 L233 93.5 C190 85 150 76 108 64.5 Z" fill="#dcdcdc"/>
  <path d="M230 89.3 L273.7 50.3 L275 51.5 L232 92 Z" fill="#d6d6d6"/>
 </g>
 <g stroke="#ffffff" stroke-opacity="0.6" stroke-width="1.2">
  <path d="M700 95 L900 0 M720 95 L918 5 M760 95 L918 22 M600 60 L760 0"/>
 </g>
 <!-- buildings -->
 <defs>
  <linearGradient id="tw" x1="0" y1="0" x2="1" y2="0">
   <stop offset="0" stop-color="#aeb0b4"/><stop offset="0.45" stop-color="#6a6c70"/><stop offset="1" stop-color="#2e3034"/>
  </linearGradient>
  <linearGradient id="tw2" x1="0" y1="0" x2="1" y2="0">
   <stop offset="0" stop-color="#d6d8dc"/><stop offset="0.5" stop-color="#9c9ea2"/><stop offset="1" stop-color="#5a5c60"/>
  </linearGradient>
 </defs>
 <g>
  <rect x="762.4" y="73.6" width="9.9" height="21.4" fill="url(#tw2)"/>
  <rect x="762.4" y="73.6" width="9.9" height="21.4" fill="none" stroke="#777" stroke-width="0.6"/>
  <rect x="775.5" y="75.7" width="6.6" height="19.3" fill="url(#tw)"/>
  <rect x="784.3" y="61.5" width="12.1" height="33.5" fill="url(#tw)"/>
  <rect x="796.4" y="81.2" width="8.6" height="13.8" fill="#5a5c60"/>
  <rect x="803" y="52.8" width="11" height="42.2" fill="url(#tw)"/>
  <rect x="814" y="72.5" width="6.4" height="22.5" fill="#4a4c50"/>
  <path d="M819.4 26 C821 22 826 20 832.5 20 L832.5 95 L819.4 95 Z" fill="url(#tw2)"/>
  <path d="M827 1.5 C830 0.2 838 0.2 841.3 1.5 L841.3 95 L827 95 Z" fill="url(#tw)"/>
  <rect x="838" y="40.7" width="14" height="54.3" fill="url(#tw)"/>
  <rect x="840" y="63.7" width="6.7" height="31.3" fill="#d4d6da"/>
  <rect x="849" y="57" width="7.6" height="38" fill="url(#tw)"/>
  <rect x="856" y="74" width="8" height="21" fill="#8a8c90"/>
  <rect x="871.2" y="30.8" width="1.4" height="18" fill="#55575b"/>
  <ellipse cx="872.4" cy="52.5" rx="3.9" ry="4.3" fill="url(#tw)"/>
  <rect x="870.6" y="56.5" width="3.4" height="12" fill="#dcdde0"/>
  <path d="M864 95 L864 70 C872 65 886 65 894 71 L894 95 Z" fill="url(#tw)"/>
  <rect x="866" y="75" width="5" height="20" fill="#c4c6ca"/>
  <rect x="880" y="78" width="4" height="17" fill="#3a3c40"/>
  <rect x="895" y="78" width="8.7" height="17" fill="url(#tw)"/>
  <rect x="904.8" y="84.5" width="3.2" height="10.5" fill="#55575b"/>
  <rect x="820" y="80" width="44" height="15" fill="#6a6c70" opacity="0.7"/>
 </g>
 <!-- man -->
 <defs>
  <linearGradient id="suit2" x1="0" y1="0" x2="1" y2="0">
   <stop offset="0" stop-color="#707074"/><stop offset="0.4" stop-color="#8a8a8e"/><stop offset="0.75" stop-color="#929296"/><stop offset="1" stop-color="#7a7a7e"/>
  </linearGradient>
  <pattern id="stripe" width="2.4" height="2.4" patternUnits="userSpaceOnUse">
   <rect width="2.4" height="2.4" fill="#b89cc4"/><rect width="1.2" height="1.2" fill="#8a6a9a"/>
  </pattern>
  <pattern id="pin" width="2.5" height="6" patternUnits="userSpaceOnUse" patternTransform="rotate(12)">
   <rect width="2.5" height="6" fill="none"/><rect width="0.5" height="6" fill="#a8a8ac" opacity="0.6"/>
  </pattern>
 </defs>
 <g>
  <path d="M660.6 95 C662 90 665 88 670 86 C677 82 684 79 690 76.3 L705 74 L722 67 C732 71 746 77 756.8 83.2 C760 86 762 90 762.6 95 Z" fill="url(#suit2)"/>
  <path d="M660.6 95 C662 90 665 88 670 86 C677 82 684 79 690 76.3 L705 74 L722 67 C732 71 746 77 756.8 83.2 C760 86 762 90 762.6 95 Z" fill="url(#pin)"/>
  <path d="M690 66 L699 70 L705 76 L711 70 L720 64.7 L723 70 L716 95 L694 95 L688 74 Z" fill="url(#stripe)"/>
  <path d="M693.5 56 L716.5 56 L716 68 C712 73 698 73 694 68 Z" fill="#dba486"/>
  <path d="M699.5 79 L708 79 L706.5 83.5 L709 95 L698 95 L701 83.5 Z" fill="#1c2238"/>
  <path d="M701 86 L707 84 M700 90 L708 88" stroke="#3a4a70" stroke-width="0.7"/>
  <path d="M688 74 L695 95 L683 95 L678 82 Z" fill="#5c5c60"/>
  <path d="M723 70 L716 95 L727 95 L733 78 Z" fill="#68686c"/>
  <path d="M685.5 32 C685 44 687 54 691 60 C694.5 65 698.5 67.5 703 67.5 C708 67.5 713 64.5 717 59 C721 53 724 44 723.5 32 C722 22 713 17 704.5 17 C696 17 687 22 685.5 32 Z" fill="#e6b494"/>
  <ellipse cx="684.2" cy="41.5" rx="2.3" ry="4.6" fill="#dca486"/>
  <ellipse cx="725" cy="41.5" rx="2.3" ry="4.6" fill="#dca486"/>
  <path d="M682 33.7 C680.5 24 682 14 689 8 C695 3 712 2 720 7 C727 11.5 729 22 725.7 33.7 L723.4 32.5 C722 27 720 24 717 23.3 C710 20.5 700 20.5 693.5 21.5 C689 23 687.5 26 686.6 30 Z" fill="#17171a"/>
  <g fill="none" stroke="#2c2a2a">
   <path d="M685 36 L701.5 35.5 L702 42 L688 42.5 Z" stroke-width="1.4"/>
   <path d="M707.5 35.5 L725 35.2 L723.5 42 L708 42 Z" stroke-width="1.4"/>
   <path d="M701.5 37 L707.5 37" stroke-width="1.2"/>
  </g>
  <path d="M695.5 53.5 C699 54.5 706 54.5 710 53.5 C709 57.5 706 59.5 702.8 59.5 C699.5 59.5 696.5 57.5 695.5 53.5 Z" fill="#fff" stroke="#b85a50" stroke-width="0.9"/>
 </g>
</svg>

<!-- section title -->
<div class="a" style="left:148px;top:274px;font-size:15px;color:#333">相关书籍</div>
<div class="a" style="left:148px;top:298px;width:613px;height:2px;background:#1a8ae0"></div>

<div id="books">
<svg class="a" style="left:148px;top:313px" width="70" height="102"><use href="#bk1"/></svg>
<div class="a t" style="left:239px;top:329px">三生三世枕上书·终篇</div>
<div class="a d" style="left:239px;top:351px">作者：唐七公子 著</div>
<div class="a d" style="left:239px;top:370px">出版社：湖南文艺出版社</div>
<div class="a d" style="left:239px;top:390px">出版时间：<span class="n">2013</span>年<span class="n">11</span>月</div>
<svg class="a" style="left:148px;top:426px" width="70" height="102"><use href="#bk1"/></svg>
<div class="a t" style="left:239px;top:442px">三生三世枕上书·终篇</div>
<div class="a d" style="left:239px;top:464px">作者：唐七公子 著</div>
<div class="a d" style="left:239px;top:483px">出版社：湖南文艺出版社</div>
<div class="a d" style="left:239px;top:503px">出版时间：<span class="n">2013</span>年<span class="n">11</span>月</div>
<svg class="a" style="left:148px;top:546px" width="70" height="102"><use href="#bk1"/></svg>
<div class="a t" style="left:239px;top:562px">三生三世枕上书·终篇</div>
<div class="a d" style="left:239px;top:584px">作者：唐七公子 著</div>
<div class="a d" style="left:239px;top:603px">出版社：湖南文艺出版社</div>
<div class="a d" style="left:239px;top:623px">出版时间：<span class="n">2013</span>年<span class="n">11</span>月</div>
<svg class="a" style="left:148px;top:663px" width="70" height="102"><use href="#bk1"/></svg>
<div class="a t" style="left:239px;top:679px">三生三世枕上书·终篇</div>
<div class="a d" style="left:239px;top:701px">作者：唐七公子 著</div>
<div class="a d" style="left:239px;top:720px">出版社：湖南文艺出版社</div>
<div class="a d" style="left:239px;top:740px">出版时间：<span class="n">2013</span>年<span class="n">11</span>月</div>
<svg class="a" style="left:472px;top:319px" width="90" height="96"><use href="#bk2"/></svg>
<div class="a t" style="left:580px;top:328px">罗辑思维:有种，有趣，有料</div>
<div class="a d" style="left:580px;top:350px">作者：罗振宇</div>
<div class="a d" style="left:580px;top:369px">出版社：长江文艺出版社</div>
<div class="a d" style="left:580px;top:389px">出版时间：<span class="n">2013</span>年<span class="n">10</span>月</div>
<svg class="a" style="left:472px;top:432px" width="90" height="96"><use href="#bk2"/></svg>
<div class="a t" style="left:580px;top:439px">罗辑思维:有种，有趣，有料</div>
<div class="a d" style="left:580px;top:461px">作者：罗振宇</div>
<div class="a d" style="left:580px;top:480px">出版社：长江文艺出版社</div>
<div class="a d" style="left:580px;top:500px">出版时间：<span class="n">2013</span>年<span class="n">10</span>月</div>
<svg class="a" style="left:472px;top:552px" width="90" height="96"><use href="#bk2"/></svg>
<div class="a t" style="left:580px;top:557px">罗辑思维:有种，有趣，有料</div>
<div class="a d" style="left:580px;top:579px">作者：罗振宇</div>
<div class="a d" style="left:580px;top:598px">出版社：长江文艺出版社</div>
<div class="a d" style="left:580px;top:618px">出版时间：<span class="n">2013</span>年<span class="n">10</span>月</div>
<svg class="a" style="left:472px;top:669px" width="90" height="96"><use href="#bk2"/></svg>
<div class="a t" style="left:580px;top:678px">罗辑思维:有种，有趣，有料</div>
<div class="a d" style="left:580px;top:700px">作者：罗振宇</div>
<div class="a d" style="left:580px;top:719px">出版社：长江文艺出版社</div>
<div class="a d" style="left:580px;top:739px">出版时间：<span class="n">2013</span>年<span class="n">10</span>月</div>
</div>

<!-- sidebar -->
<div class="a" style="left:783px;top:280px;width:280px;height:513px;border:4px solid #ececec;background:#fff"></div>
<div class="a" style="left:802px;top:296px;font-size:15px;color:#3795dd">会员登录</div>
<div class="a" style="left:966px;top:301px;font-size:12px;color:#3795dd">忘记密码</div>
<div class="a" style="left:1024px;top:301px;font-size:12px;color:#3795dd">帮助</div>
<div class="a" style="left:799px;top:326px;width:95px;height:24px;border:1px solid #d5d5d5;background:#fff"></div>
<div class="a" style="left:808px;top:333px;font-size:12px;color:#808080">用户名</div>
<div class="a" style="left:902px;top:326px;width:90px;height:24px;border:1px solid #d5d5d5;background:#fff"></div>
<div class="a" style="left:905px;top:333px;font-size:12px;color:#808080">密码</div>
<div class="a" style="left:998px;top:326px;width:52px;height:24px;border:1px solid #d5d5d5;background:linear-gradient(#fafafa,#eeeeee)"></div>
<div class="a" style="left:1010px;top:331px;font-size:14px;color:#3795dd">登录</div>
<div class="a" style="left:798px;top:366px;width:253px;height:1px;background:#e6e6e6"></div>
<div class="a" style="left:804px;top:385px;font-size:15px;color:#3795dd">新闻推荐</div>
<div id="news">
<div class="bul" style="top:420px"></div><div class="a nw" style="top:414px">陕西化企坦然面对公众监督</div>
<div class="bul" style="top:444px"></div><div class="a nw" style="top:438px">常州滨江化工园废气防控显成效</div>
<div class="bul" style="top:468px"></div><div class="a nw" style="top:462px">济南强化油气回收综合治理</div>
<div class="bul" style="top:492px"></div><div class="a nw" style="top:486px">中昊晨光冷却水回用率大幅提高</div>
<div class="bul" style="top:516px"></div><div class="a nw" style="top:510px">更多细化政策破解节能环保金难题</div>
<div class="bul" style="top:540px"></div><div class="a nw" style="top:534px">陕西化企坦然面对公众监督</div>
<div class="bul" style="top:564px"></div><div class="a nw" style="top:558px">常州滨江化工园废气防控显成效</div>
<div class="bul" style="top:588px"></div><div class="a nw" style="top:582px">济南强化油气回收综合治理</div>
<div class="bul" style="top:612px"></div><div class="a nw" style="top:606px">中昊晨光冷却水回用率大幅提高</div>
<div class="bul" style="top:636px"></div><div class="a nw" style="top:630px">更多细化政策破解节能环保金难题</div>
<div class="bul" style="top:660px"></div><div class="a nw" style="top:654px">陕西化企坦然面对公众监督</div>
<div class="bul" style="top:684px"></div><div class="a nw" style="top:678px">常州滨江化工园废气防控显成效</div>
<div class="bul" style="top:708px"></div><div class="a nw" style="top:702px">济南强化油气回收综合治理</div>
<div class="bul" style="top:732px"></div><div class="a nw" style="top:726px">更多细化政策破解节能环保金难题</div>
<div class="bul" style="top:756px"></div><div class="a nw" style="top:750px">常州滨江化工园废气防控显成效</div>
</div>

<!-- pagination -->
<div class="a" style="left:359px;top:782px;width:22px;height:22px;background:#000"></div>
<div class="a pg" style="left:366px;top:785px;color:#fff">1</div>
<div class="a pg" style="left:402px;top:785px">2</div>
<div class="a pg" style="left:438px;top:785px">3</div>
<div class="a pg" style="left:474px;top:785px">4</div>
<div class="a pg" style="left:511px;top:785px">5</div>
<div class="a" style="left:547px;top:785px;font-size:14px;color:#333">下一页</div>

<!-- footer -->
<div class="a" style="left:145px;top:827px;width:918px;height:1px;background:#e3e3e3"></div>
<div class="a" style="left:145px;top:838px;font-size:13px;color:#333">Copyright © 2009-2013 www.ccin.com.cn All Rights Reserved. <span style="font-size:12px">中化新网 版权所有</span></div>
<div class="a" style="left:763px;top:838px;font-size:12px;color:#333">京<span style="font-size:12.5px">ICP</span>证<span style="font-size:12.5px">100512</span>号 京公网安备 网站设计：北京蓝蓝设计</div>
</body></html>
